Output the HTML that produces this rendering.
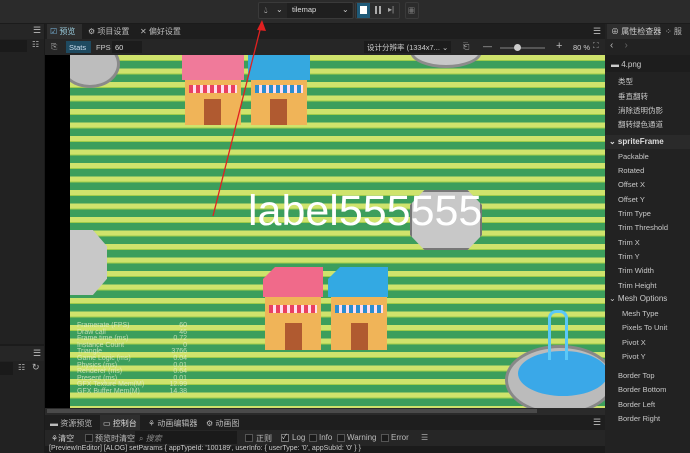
<!DOCTYPE html>
<html><head><meta charset="utf-8"><style>
*{margin:0;padding:0;box-sizing:border-box}
body{width:690px;height:453px;overflow:hidden;background:#1b1b1b;font-family:"Liberation Sans","Noto Sans CJK SC",sans-serif;font-size:8px;color:#ccc;position:relative}
.a{position:absolute;white-space:nowrap}
.game{left:70px;top:55px;width:535px;height:353px;overflow:hidden;background:repeating-linear-gradient(180deg,#cfe36c 0,#cfe36c 5px,#9fcc4a 5px,#9fcc4a 6px,#3c9e5c 6px,#3c9e5c 13.5px)}
.rp div{position:absolute;left:18px;color:#c8c8c8;font-size:7.5px;white-space:nowrap}
.stat{color:#e8f0d0;font-size:7px;line-height:6.6px;opacity:.75}
</style></head><body>
<!-- top bar -->
<div class="a" style="left:0;top:0;width:690px;height:23px;background:#2b2b2b"></div>
<div class="a" style="left:258px;top:2px;width:96px;height:17px;border:1px solid #3a3a3a;background:#262626;border-radius:2px"></div>
<div class="a" style="left:264px;top:5px;font-size:9px;color:#ddd">💧︎</div>
<div class="a" style="left:276px;top:5px;color:#ccc">⌄</div>
<div class="a" style="left:287px;top:3px;width:65px;height:15px;background:#1f1f1f"></div>
<div class="a" style="left:292px;top:5px;color:#ddd;font-size:7.5px">tilemap</div>
<div class="a" style="left:342px;top:5px;color:#ccc">⌄</div>
<div class="a" style="left:355px;top:2px;width:45px;height:17px;border:1px solid #3a3a3a;border-radius:2px"></div>
<div class="a" style="left:357px;top:3px;width:13px;height:15px;background:#1f5a78"></div>
<div class="a" style="left:360px;top:6px;width:7px;height:8px;background:#fff"></div>
<div class="a" style="left:375px;top:6px;width:2px;height:8px;background:#aaa"></div>
<div class="a" style="left:379px;top:6px;width:2px;height:8px;background:#aaa"></div>
<div class="a" style="left:388px;top:5px;color:#aaa;font-size:8px">▸|</div>
<div class="a" style="left:405px;top:2px;width:14px;height:17px;border:1px solid #3a3a3a;border-radius:2px;color:#aaa;font-size:7px;padding:3px 2px">▦</div>
<!-- left panel -->
<div class="a" style="left:0;top:24px;width:44px;height:320px;background:#222"></div>
<div class="a" style="left:0;top:24px;width:44px;height:15px;background:#262626"></div>
<div class="a" style="left:33px;top:25px;color:#bbb;font-size:9px">☰</div>
<div class="a" style="left:0;top:40px;width:27px;height:12px;background:#1a1a1a"></div>
<div class="a" style="left:32px;top:40px;color:#bbb;font-size:8px">☷</div>
<div class="a" style="left:0;top:346px;width:44px;height:107px;background:#222"></div>
<div class="a" style="left:0;top:346px;width:44px;height:15px;background:#262626"></div>
<div class="a" style="left:33px;top:348px;color:#bbb;font-size:9px">☰</div>
<div class="a" style="left:0;top:362px;width:13px;height:13px;background:#1a1a1a"></div>
<div class="a" style="left:18px;top:363px;color:#bbb">☷</div>
<div class="a" style="left:32px;top:362px;color:#bbb;font-size:9px">↻</div>
<!-- preview panel -->
<div class="a" style="left:45px;top:24px;width:560px;height:15px;background:#1e1e1e"></div>
<div class="a" style="left:47px;top:24px;width:35px;height:15px;background:#2e2e2e"></div>
<div class="a" style="left:50px;top:26px;color:#7ab8e0;font-size:8px">☑ <span style="color:#9cd">预览</span></div>
<div class="a" style="left:88px;top:26px;color:#bbb">⚙ 项目设置</div>
<div class="a" style="left:140px;top:26px;color:#bbb">✕ 偏好设置</div>
<div class="a" style="left:593px;top:26px;color:#bbb;font-size:9px">☰</div>
<div class="a" style="left:45px;top:39px;width:560px;height:16px;background:#262626"></div>
<div class="a" style="left:51px;top:42px;color:#aaa">⎘</div>
<div class="a" style="left:66px;top:41px;width:25px;height:12px;background:#1f4a60;color:#cde;font-size:7.5px;padding:2px 3px">Stats</div>
<div class="a" style="left:96px;top:43px;color:#ccc;font-size:7.5px">FPS</div>
<div class="a" style="left:112px;top:41px;width:30px;height:12px;background:#1c1c1c;color:#ddd;font-size:7.5px;padding:2px 3px">60</div>
<div class="a" style="left:364px;top:41px;width:87px;height:12px;background:#1c1c1c;color:#ccc;font-size:7.5px;padding:1px 3px">设计分辨率 (1334x7... ⌄</div>
<div class="a" style="left:463px;top:42px;color:#aaa">⎗</div>
<div class="a" style="left:483px;top:41px;color:#bbb;font-size:9px">—</div>
<div class="a" style="left:500px;top:47px;width:45px;height:2px;background:#555"></div>
<div class="a" style="left:514px;top:44px;width:7px;height:7px;border-radius:50%;background:#ccc"></div>
<div class="a" style="left:556px;top:40px;color:#bbb;font-size:11px">+</div>
<div class="a" style="left:573px;top:43px;color:#ccc;font-size:7.5px">80 %</div>
<div class="a" style="left:593px;top:41px;color:#aaa">⛶</div>
<div class="a" style="left:45px;top:55px;width:25px;height:353px;background:#000"></div>
<!-- game -->
<div class="a game">
 <div class="a" style="left:-10px;top:-15px;width:60px;height:48px;border-radius:50%;background:#bdbdbd;border:3px solid #8a8a8a"></div>
 <div class="a" style="left:340px;top:-20px;width:72px;height:33px;border-radius:50%;background:#c8c8c8;border:3px solid #8c8c8c"></div>
 <div class="a" style="left:112px;top:0;width:62px;height:25px;background:#f07a9a"></div>
 <div class="a" style="left:115px;top:25px;width:56px;height:45px;background:#f0b458"></div>
 <div class="a" style="left:119px;top:30px;width:48px;height:8px;background:repeating-linear-gradient(90deg,#e94060 0 4px,#fde 4px 7px)"></div>
 <div class="a" style="left:134px;top:44px;width:17px;height:26px;background:#b05a30"></div>
 <div class="a" style="left:178px;top:0;width:62px;height:25px;background:#35a8e0"></div>
 <div class="a" style="left:181px;top:25px;width:56px;height:45px;background:#f0b458"></div>
 <div class="a" style="left:185px;top:30px;width:48px;height:8px;background:repeating-linear-gradient(90deg,#2c8ed0 0 4px,#fde 4px 7px)"></div>
 <div class="a" style="left:200px;top:44px;width:17px;height:26px;background:#b05a30"></div>
 <div class="a" style="left:193px;top:212px;width:60px;height:30px;background:#f06a8a;clip-path:polygon(20% 0,100% 0,100% 100%,0 100%,0 40%)"></div>
 <div class="a" style="left:195px;top:242px;width:56px;height:53px;background:#f0b458"></div>
 <div class="a" style="left:199px;top:250px;width:48px;height:8px;background:repeating-linear-gradient(90deg,#e94060 0 4px,#fde 4px 7px)"></div>
 <div class="a" style="left:215px;top:268px;width:17px;height:27px;background:#b05a30"></div>
 <div class="a" style="left:258px;top:212px;width:60px;height:30px;background:#33a9e3;clip-path:polygon(20% 0,100% 0,100% 100%,0 100%,0 40%)"></div>
 <div class="a" style="left:261px;top:242px;width:56px;height:53px;background:#f0b458"></div>
 <div class="a" style="left:265px;top:250px;width:48px;height:8px;background:repeating-linear-gradient(90deg,#2c8ed0 0 4px,#fde 4px 7px)"></div>
 <div class="a" style="left:281px;top:268px;width:17px;height:27px;background:#b05a30"></div>
 <div class="a" style="left:340px;top:135px;width:72px;height:60px;background:#c8c8c8;border:2px solid #777;clip-path:polygon(20% 0,80% 0,100% 25%,100% 75%,80% 100%,20% 100%,0 75%,0 25%)"></div>
 <div class="a" style="left:-10px;top:175px;width:47px;height:65px;background:#c8c8c8;clip-path:polygon(0 0,70% 0,100% 25%,100% 75%,70% 100%,0 100%)"></div>
 <div class="a" style="left:435px;top:290px;width:110px;height:70px;border-radius:50%;background:#bbb;border:3px solid #888"></div>
 <div class="a" style="left:448px;top:296px;width:90px;height:45px;border-radius:50%;background:#3aa8e8"></div>
 <div class="a" style="left:478px;top:255px;width:20px;height:50px;border:3px solid #5ac8f8;border-bottom:none;border-radius:8px 8px 0 0"></div>
 <div class="a" style="left:178px;top:132px;color:#fff;font-size:43px;line-height:48px;font-family:'Liberation Sans',sans-serif">label555555</div>
 <div class="a stat" style="left:7px;top:268px;width:110px">
  <div>Framerate (FPS)<span style="float:right">60</span></div><div>Draw call<span style="float:right">46</span></div><div>Frame time (ms)<span style="float:right">0.72</span></div><div>Instance Count<span style="float:right">0</span></div><div>Triangle<span style="float:right">3766</span></div><div>Game Logic (ms)<span style="float:right">0.04</span></div><div>Physics (ms)<span style="float:right">0.01</span></div><div>Renderer (ms)<span style="float:right">0.64</span></div><div>Present (ms)<span style="float:right">0.01</span></div><div>GFX Texture Mem(M)<span style="float:right">12.99</span></div><div>GFX Buffer Mem(M)<span style="float:right">14.38</span></div>
 </div>
</div>
<svg class="a" style="left:0;top:0" width="690" height="453"><line x1="213" y1="216" x2="261" y2="26" stroke="#e02020" stroke-width="1.3"/><polygon points="262,20 257,30 266,31" fill="#e02020"/></svg>
<!-- scrollbar -->
<div class="a" style="left:45px;top:408px;width:560px;height:7px;background:#2a2a2a"></div>
<div class="a" style="left:47px;top:409px;width:490px;height:4px;background:#4a4a4a"></div>
<!-- bottom -->
<div class="a" style="left:45px;top:415px;width:560px;height:15px;background:#1e1e1e"></div>
<div class="a" style="left:50px;top:418px;color:#bbb">▬ 资源预览</div>
<div class="a" style="left:100px;top:415px;width:40px;height:15px;background:#2e2e2e"></div>
<div class="a" style="left:103px;top:418px;color:#ddd">▭ 控制台</div>
<div class="a" style="left:148px;top:418px;color:#bbb">⚘ 动画编辑器</div>
<div class="a" style="left:206px;top:418px;color:#bbb">⚙ 动画图</div>
<div class="a" style="left:593px;top:417px;color:#bbb;font-size:9px">☰</div>
<div class="a" style="left:45px;top:430px;width:560px;height:16px;background:#262626"></div>
<div class="a" style="left:51px;top:433px;color:#ccc">⚘清空</div>
<div class="a" style="left:85px;top:434px;width:8px;height:8px;border:1px solid #555;background:#1a1a1a"></div>
<div class="a" style="left:95px;top:433px;color:#bbb">预览时清空</div>
<div class="a" style="left:135px;top:431px;width:102px;height:13px;background:#1a1a1a;color:#888;padding:2px 4px">⌕ <i>搜索</i></div>
<div class="a" style="left:245px;top:434px;width:8px;height:8px;border:1px solid #555;background:#1a1a1a"></div>
<div class="a" style="left:256px;top:433px;color:#bbb">正则</div>
<div class="a" style="left:281px;top:434px;width:8px;height:8px;border:1px solid #777;background:#1a1a1a;color:#ddd;font-size:7px;line-height:6px">✓</div>
<div class="a" style="left:292px;top:433px;color:#bbb">Log</div>
<div class="a" style="left:309px;top:434px;width:8px;height:8px;border:1px solid #555;background:#1a1a1a"></div>
<div class="a" style="left:319px;top:433px;color:#bbb">Info</div>
<div class="a" style="left:337px;top:434px;width:8px;height:8px;border:1px solid #555;background:#1a1a1a"></div>
<div class="a" style="left:347px;top:433px;color:#bbb">Warning</div>
<div class="a" style="left:381px;top:434px;width:8px;height:8px;border:1px solid #555;background:#1a1a1a"></div>
<div class="a" style="left:391px;top:433px;color:#bbb">Error</div>
<div class="a" style="left:421px;top:433px;color:#aaa">☰</div>
<div class="a" style="left:45px;top:446px;width:560px;height:7px;background:#1b1b1b"></div>
<div class="a" style="left:49px;top:445px;color:#ccc;font-size:7px;white-space:nowrap">[PreviewInEditor] [ALOG] setParams { appTypeId: '100189', userInfo: { userType: '0', appSubId: '0' } }</div>
<!-- right panel -->
<div class="a" style="left:605px;top:24px;width:85px;height:429px;background:#222"></div>
<div class="a" style="left:607px;top:24px;width:53px;height:15px;background:#2e2e2e"></div>
<div class="a" style="left:611px;top:26px;color:#ccc">⊕ 属性检查器</div>
<div class="a" style="left:665px;top:26px;color:#bbb">⁘ 服</div>
<div class="a" style="left:610px;top:40px;color:#bbb;font-size:10px">‹ &nbsp;&nbsp;&nbsp;<span style="color:#666">›</span></div>
<div class="a" style="left:605px;top:55px;width:85px;height:17px;background:#1d1d1d"></div>
<div class="a" style="left:611px;top:60px;color:#ccc">▬ <span>4.png</span></div>
<div class="a" style="left:605px;top:135px;width:85px;height:14px;background:#2a2a2a"></div>
<div class="a" style="left:609px;top:137px;color:#ddd;font-weight:bold">⌄ spriteFrame</div>
<div class="a" style="left:609px;top:294px;color:#ccc">⌄ Mesh Options</div>
<div class="rp a" style="left:600px;top:0">
<div style="top:76px">类型</div><div style="top:91px">垂直翻转</div><div style="top:105px">消除透明伪影</div><div style="top:119px">翻转绿色通道</div>
<div style="top:152px">Packable</div><div style="top:166px">Rotated</div><div style="top:180px">Offset X</div><div style="top:195px">Offset Y</div><div style="top:209px">Trim Type</div><div style="top:223px">Trim Threshold</div><div style="top:238px">Trim X</div><div style="top:252px">Trim Y</div><div style="top:266px">Trim Width</div><div style="top:281px">Trim Height</div>
<div style="top:309px;left:22px">Mesh Type</div><div style="top:323px;left:22px">Pixels To Unit</div><div style="top:338px;left:22px">Pivot X</div><div style="top:352px;left:22px">Pivot Y</div>
<div style="top:371px">Border Top</div><div style="top:385px">Border Bottom</div><div style="top:400px">Border Left</div><div style="top:414px">Border Right</div>
</div>
</body></html>
